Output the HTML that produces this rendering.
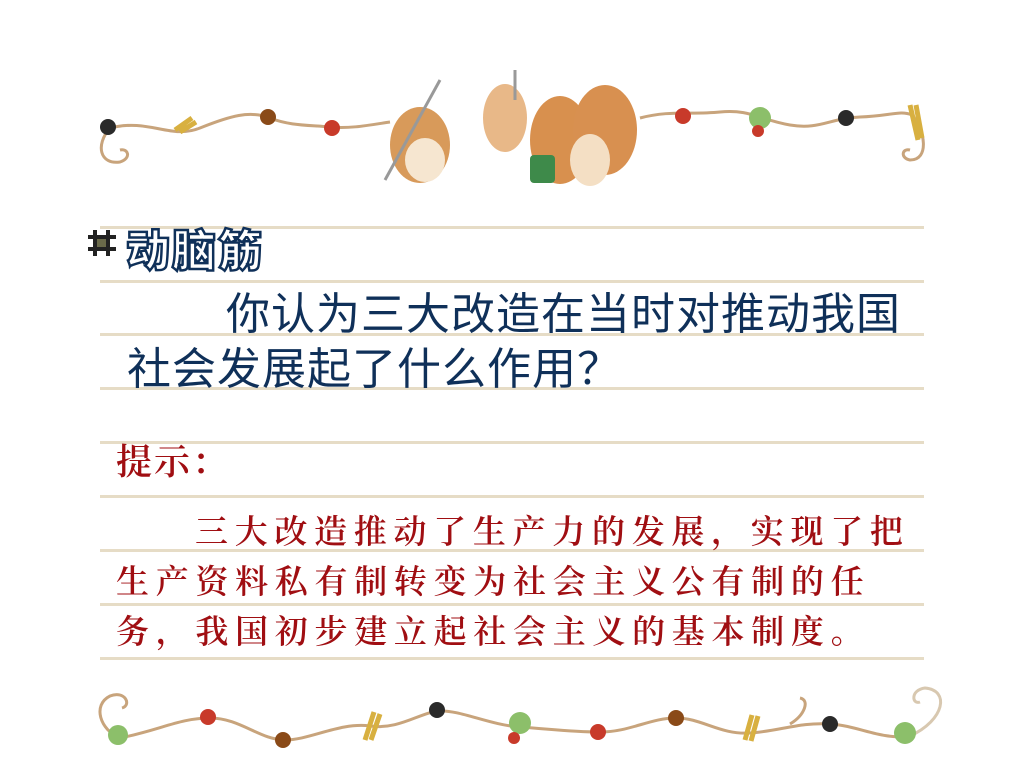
<!DOCTYPE html>
<html><head><meta charset="utf-8"><style>
html,body{margin:0;padding:0;background:#fff;}
body{width:1023px;height:766px;position:relative;overflow:hidden;}
.ln{position:absolute;left:100px;width:824px;height:3px;background:#e6dcc6;}
.t{position:absolute;white-space:nowrap;}
.b{font-family:"Liberation Sans","Noto Sans CJK SC",sans-serif;color:#0f3059;font-size:44px;line-height:50px;}
.r{font-family:"Liberation Serif","Noto Serif CJK SC",serif;font-weight:600;color:#a00e12;font-size:33px;line-height:40px;letter-spacing:6.7px;}
</style></head><body>
<div class="ln" style="top:226px"></div>
<div class="ln" style="top:280px"></div>
<div class="ln" style="top:333px"></div>
<div class="ln" style="top:387px"></div>
<div class="ln" style="top:441px"></div>
<div class="ln" style="top:495px"></div>
<div class="ln" style="top:549px"></div>
<div class="ln" style="top:603px"></div>
<div class="ln" style="top:657px"></div>

<svg style="position:absolute;left:0;top:0" width="1023" height="766">
 <path d="M110 128 C150 118 170 140 200 128 S250 110 270 118 S310 125 330 127 S370 125 390 122" fill="none" stroke="#c8a47c" stroke-width="3"/>
 <path d="M110 128 C95 145 100 165 120 162 C132 158 128 148 120 150" fill="none" stroke="#c8a47c" stroke-width="3"/>
 <path d="M640 118 C670 110 690 115 720 112 S760 120 790 125 S830 118 860 117 S900 110 912 115 C925 130 930 160 910 160 C900 158 902 148 910 150" fill="none" stroke="#c8a47c" stroke-width="3"/>
 <circle cx="108" cy="127" r="8" fill="#2a2a2a"/>
 <path d="M175 130 L192 118 M180 132 L196 122" stroke="#d8b040" stroke-width="5"/>
 <circle cx="268" cy="117" r="8" fill="#8a4a18"/>
 <circle cx="332" cy="128" r="8" fill="#c83a2a"/>
 <circle cx="683" cy="116" r="8" fill="#c83a2a"/>
 <circle cx="760" cy="118" r="11" fill="#8cbf6a"/>
 <circle cx="758" cy="131" r="6" fill="#c83a2a"/>
 <circle cx="846" cy="118" r="8" fill="#2a2a2a"/>
 <path d="M910 105 L918 140 M916 105 L922 138" stroke="#d8b040" stroke-width="5"/>
 <ellipse cx="420" cy="145" rx="30" ry="38" fill="#d89a5a"/>
 <ellipse cx="425" cy="160" rx="20" ry="22" fill="#f6e6d0"/>
 <line x1="385" y1="180" x2="440" y2="80" stroke="#999" stroke-width="3"/>
 <ellipse cx="505" cy="118" rx="22" ry="34" fill="#e8b888"/>
 <ellipse cx="560" cy="140" rx="30" ry="44" fill="#d8904e"/>
 <ellipse cx="605" cy="130" rx="32" ry="45" fill="#d89050"/>
 <ellipse cx="590" cy="160" rx="20" ry="26" fill="#f4dfc4"/>
 <rect x="530" y="155" width="25" height="28" rx="4" fill="#3e8a4a"/>
 <line x1="515" y1="70" x2="515" y2="100" stroke="#999" stroke-width="3"/>
 <path d="M120 738 C160 730 180 718 210 718 S260 740 285 740 S340 722 370 726 S420 712 440 711 S490 725 520 727 S570 732 600 732 S650 718 676 718 S720 735 750 733 S800 722 830 724 S880 740 910 736" fill="none" stroke="#c8a47c" stroke-width="3"/>
 <path d="M120 738 C100 730 92 705 110 696 C125 690 132 705 122 708" fill="none" stroke="#c8a47c" stroke-width="3"/>
 <path d="M790 724 C805 715 810 700 800 698" fill="none" stroke="#c8a47c" stroke-width="3"/>
 <path d="M910 736 C945 720 950 690 925 688 C910 690 912 705 920 702" fill="none" stroke="#d8c8b0" stroke-width="3"/>
 <circle cx="118" cy="735" r="10" fill="#8cbf6a"/>
 <circle cx="208" cy="717" r="8" fill="#c83a2a"/>
 <circle cx="283" cy="740" r="8" fill="#8a4a18"/>
 <path d="M365 740 L374 712 M371 740 L380 714" stroke="#d8b040" stroke-width="5"/>
 <circle cx="437" cy="710" r="8" fill="#2a2a2a"/>
 <circle cx="520" cy="723" r="11" fill="#8cbf6a"/>
 <circle cx="514" cy="738" r="6" fill="#c83a2a"/>
 <circle cx="598" cy="732" r="8" fill="#c83a2a"/>
 <circle cx="676" cy="718" r="8" fill="#8a4a18"/>
 <path d="M745 740 L752 715 M751 741 L758 716" stroke="#d8b040" stroke-width="5"/>
 <circle cx="830" cy="724" r="8" fill="#2a2a2a"/>
 <circle cx="905" cy="733" r="11" fill="#8cbf6a"/>
 <g stroke="#222" stroke-width="4"><line x1="95" y1="230" x2="95" y2="256"/><line x1="108" y1="230" x2="108" y2="256"/><line x1="88" y1="237" x2="116" y2="237"/><line x1="88" y1="249" x2="116" y2="249"/></g>
 <rect x="97" y="239" width="9" height="8" fill="#6a6a4a"/>
</svg>

<div class="t" style="left:126px;top:222px;font-family:'Noto Sans CJK SC',sans-serif;font-weight:900;font-size:44px;line-height:50px;color:#fff;-webkit-text-stroke:2.5px #0f3059;letter-spacing:2px;">动脑筋</div>

<div class="t b" style="left:226px;top:290px;letter-spacing:1px;">你认为三大改造在当时对推动我国</div>
<div class="t b" style="left:127px;top:345px;letter-spacing:1px;">社会发展起了什么作用？</div>

<div class="t r" style="left:116px;top:442px;font-size:36px;letter-spacing:2px;">提示：</div>
<div class="t r" style="left:195px;top:513px;">三大改造推动了生产力的发展，实现了把</div>
<div class="t r" style="left:116px;top:563px;">生产资料私有制转变为社会主义公有制的任</div>
<div class="t r" style="left:116px;top:613px;">务，我国初步建立起社会主义的基本制度。</div>
</body></html>
